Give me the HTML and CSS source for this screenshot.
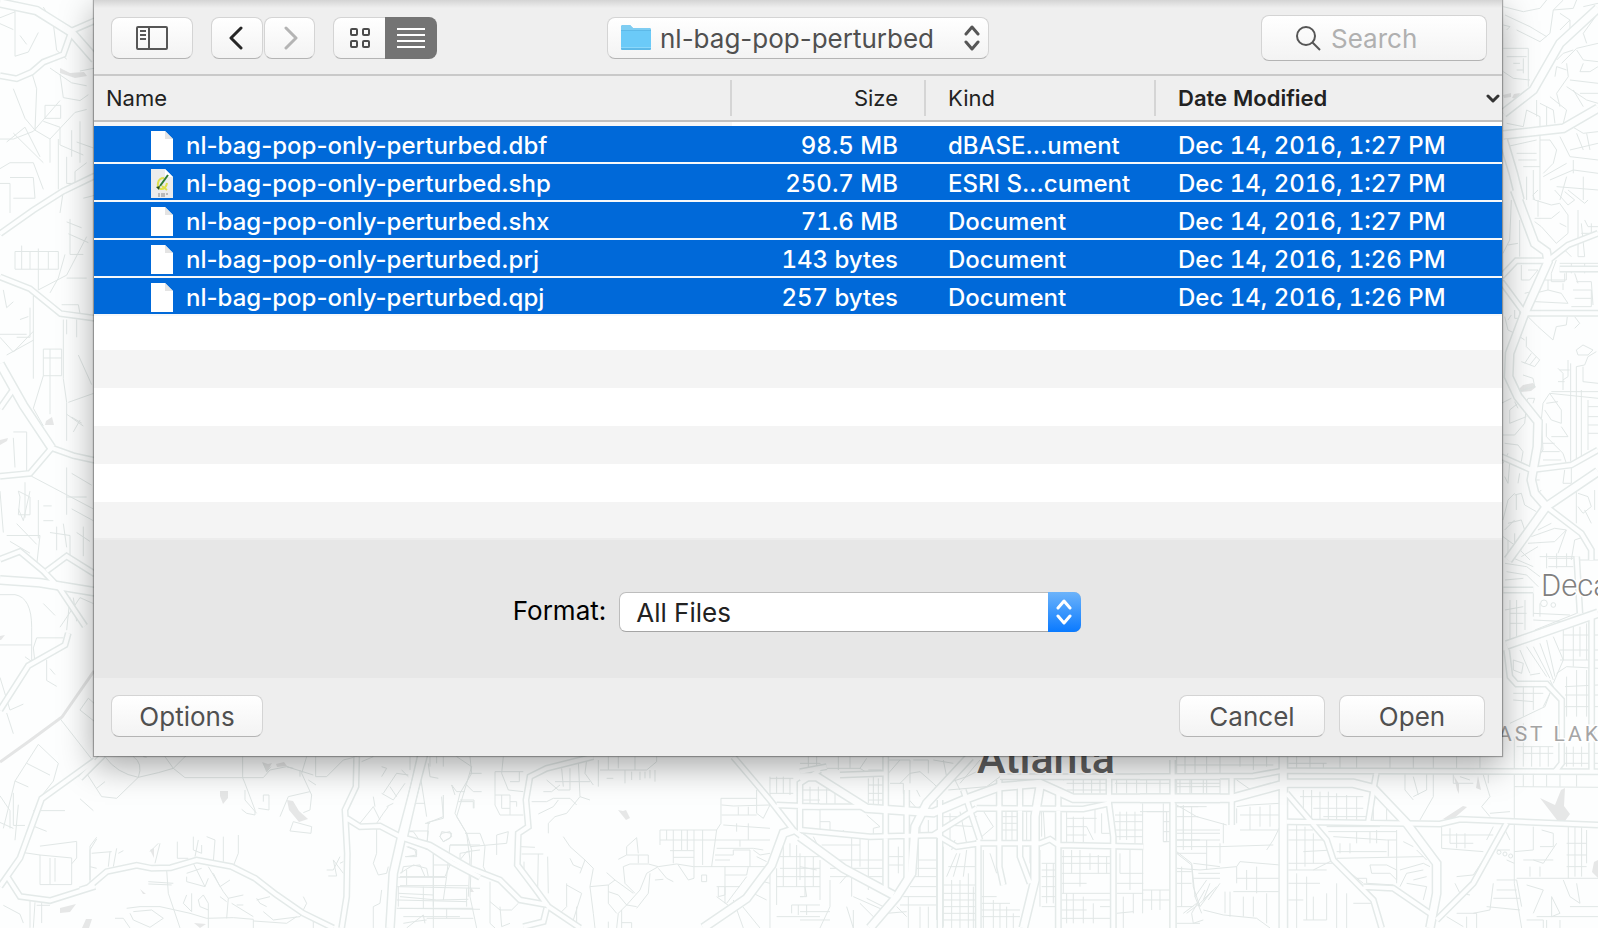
FILE: index.html
```html
<!DOCTYPE html>
<html lang="en">
<head>
<meta charset="utf-8">
<meta name="viewport" content="width=device-width, initial-scale=1">
<title>Open</title>
<link rel="stylesheet" href="styles.css">
</head>
<body>
<div class="stage">
  <svg class="map" viewBox="0 0 1598 928" preserveAspectRatio="xMinYMin slice" aria-hidden="true">
    <defs>
      <g id="avenues">
        <g transform="scale(.3333 .5917)">
          <path d="M0 468 90 488 182 530 285 538M0 395 100 355 190 323 285 297M0 128 50 133 95 122 130 105 190 92 215 52M215 52 285 35M0 805 90 800 155 757 220 770 285 778M0 945 60 932 130 965 180 995 255 1058M140 965 200 940 285 970M0 1200 85 1125 195 1090 205 1070M0 1498 60 1450 125 1350 285 1285M20 1480 60 1515 150 1522 285 1498M0 690 40 658"/>
        </g>
        <g transform="translate(80 640) scale(.3333)">
          <path d="M0 750 25 742 80 695 170 676 215 685 272 683 350 660 455 680 525 715 590 765 670 820 760 864M830 350 828 440 795 510 802 640 800 770 785 864M800 535 840 560 900 558 965 592 1045 620 1120 670 1200 712M0 415 70 345"/>
        </g>
        <g transform="translate(400 740) scale(.3333)">
          <path d="M580 50 440 85 390 110 378 180 385 260 355 280 352 375 405 445 445 500 540 564M0 290 90 315 210 385 300 420 360 480 445 495M1000 50 1110 180 1180 270 1260 330M1200 275 1200 130 1260 90M1130 195 1260 200M440 505 430 545 370 560"/>
        </g>
        <g transform="translate(800 740) scale(.3333)">
          <path d="M257 50V450M320 150V420M420 180V564M535 300V564M598 120V380L610 435M660 130V350L690 430M775 150V564M927 110V190L940 290V564M1118 60V564M0 200H200M0 270 210 290 410 285 470 320 540 310H720L750 298 775 315 1030 320M120 105 260 100M600 110H1260M530 205 850 207 930 190M490 150 540 300M400 285 530 205M0 95 80 80"/>
        </g>
        <g transform="translate(1140 550) scale(.3333)">
          <path d="M0 680 340 678 430 662 1374 665M100 760V1134M275 680V825M440 815 900 822 960 808 1374 825M440 730 560 870 580 930 700 1050 725 1134M1100 820 1000 1000 890 1110M710 665 700 720 685 815M1355 200V665M1090 120 1180 120M1100 300 1110 380 1130 402 1220 402 1265 450V640L1245 665M1310 20 1320 190M670 1010 760 1015 870 1090"/>
        </g>
        <g transform="translate(1488 190) scale(.3333)">
          <path d="M40 260 85 212 180 212 240 165 330 130M40 275 110 370M110 370H330M40 800 130 840 250 825 330 780M175 950 280 1030 310 1080V1110M215 237H330"/>
        </g>
      </g>
      <g id="highways">
        <g transform="scale(.3333 .5917)"><path d="M0 5 110 18 215 55 285 100M0 615 70 685 155 757M0 980 120 985 285 1000"/></g>
        <g transform="translate(80 640) scale(.3333)"><path d="M1030 345 965 590 940 700 930 864"/></g>
        <g transform="translate(400 740) scale(.3333)"><path d="M65 50 10 290M1180 270 1150 280 1115 375 1040 475 910 564"/></g>
        <g transform="translate(800 740) scale(.3333)"><path d="M0 110 50 110 200 205 400 218 490 180 600 140 720 130 820 175 1260 175M0 290 130 385 280 465M510 50 380 190 345 260 335 400 290 470 210 564M720 140 705 230 705 420 670 564"/></g>
        <g transform="translate(1140 550) scale(.3333)"><path d="M0 745 275 745 440 700 640 700 700 715 800 820 890 940 890 1030 870 1134M1100 285 1374 190M430 620V1134"/></g>
        <g transform="translate(1140 0) scale(.3333)"><path d="M1374 25 1260 130 1180 270 1090 340M1090 405 1270 385 1374 325M1090 420 1120 520 1140 600"/></g>
        <g transform="translate(1488 190) scale(.3333)"><path d="M80 0 140 160 175 185 180 215 110 370 65 490 62 560 90 620 150 695 148 770 130 870 140 910 175 950M330 845 175 950 60 1110"/></g>
      </g>
    </defs>

    <g class="land">
      <path d="M60 68l10 5 14-1 3 4-12 2-15-5zM0 440l8-2-1 3-7 4zM0 636l5-1-4 5H0zM60 908l16-4-6 8-10 1zM46 421l6-4 2 8h-9z"/>
      <path d="M220 791h8v7l-5 6-3-8zM262 762l6 2 4-1-5 9zM276 764l8-2 3 4-10 1zM287 800l6 1 6 10 9 8-9 3-10-12zM150 850l4-2v10zM82 928l4-9h6l-3 9zM140 889l6 5-3 0zM194 923l12 1-6 4z"/>
      <path d="M618 810l5 1 3-1 4 8-4 2zM470 886l4 6-4 0z"/>
      <path d="M1540 798l15 7 6-15 4-2-1 18 6 8-5 7-8-1zM1443 819l20-13 4 1-15 13zM1454 776l5 8v10l-2-4zM1478 776l3 14-5-2zM1594 862l4-2v18l-6-6z"/>
      <path d="M1518 390l5-5 10-2 3 4-5 4-10 1zM1503 95l8-2v4l-7 1zM1514 94l6-1-3 6-5-1z"/>
    </g>
    <path class="rail" d="M0 762 28 742 62 717 94 671"/>

    <g class="streets">
      <g transform="scale(.3333 .5917)">
        <path d="M45 18V95M45 95 85 88 115 55M130 12 160 40 170 85 200 100M0 40 40 50M95 122 110 150 105 220 75 200 40 150M0 235H40L100 222 180 170M40 225 130 275M20 240 75 215 120 265M105 220 150 235 225 190 260 185M135 178H182V200H135ZM150 115 215 140 260 145M180 125 190 165 240 170 265 160M130 205 180 215V245L250 262M150 235V275M175 235V320M215 220V265M240 205V275M200 265V310H225V290L260 275M0 285 30 275H100L130 320M30 300H100L105 335H40M0 310H30V360M190 323 180 360M45 425H175V455H45V425ZM65 415V455M90 425V455M115 420V490M145 425V455M200 375 245 385M205 395 265 410M210 370V430H250M195 430 175 470 150 495M260 400 200 465 115 490M200 470H260M10 490 20 520 40 510M50 570H90V520M60 540 85 535M0 565H80M185 515H235L240 530M200 540V565M230 540V570M100 500V640M130 590H185V635H130ZM130 605H185M150 590V700M190 540V640L200 680V745M130 635 100 690 130 720M20 600 100 575M0 570 40 595 100 560M205 680 280 665M200 700 250 720M215 705 245 715M220 730 240 710M40 730H80V800M40 740 45 790M55 830 90 840V870H55L60 840ZM75 815V875M95 805 280 860M90 830 70 880 55 860M115 845V910M130 880H160M130 855H155M0 830 10 900M200 790V870M215 800 275 820M200 840H260M215 860 280 880M20 905H120M30 915 90 935M50 885 110 920M120 905 110 955M150 900 210 905V940M170 890V930M190 885 200 925M230 900 270 915M250 890V940M0 1005H45Q95 1010 95 1060V1118M0 1090H95M95 1118 75 1110M100 1095 110 1078 190 1078M100 1095 105 1120M130 1020 165 1040M140 1115V1150L170 1160M150 1130 165 1140M210 1010 200 1065M180 1060 240 1010 280 1020M220 1010 230 1050M0 1145 30 1200 70 1190M20 1205 40 1240M240 1200 265 1180 285 1190M240 1200 285 1220M178 1213 285 1290M45 1320 115 1258 175 1290 160 1320 125 1345M80 1290 150 1310M10 1400 45 1320 85 1330M40 1340V1395H75M55 1360 45 1420M0 1390 40 1400M100 1370H195M95 1395 140 1405M60 1440 120 1445V1495H215V1450L120 1445M150 1450V1495M165 1450V1490M120 1430 230 1422V1450L215 1460M290 1415 270 1430V1495M90 1520V1568M105 1525 100 1568M110 1530H150M125 1525V1560M10 1530 60 1545 70 1560M240 1350 280 1370M0 1345 30 1370V1400M230 240 280 250M0 30 45 20M60 60 80 75M240 120 285 115M250 335 285 330M235 600 275 650"/>
      </g>
      <g transform="translate(80 640) scale(.3333)">
        <path d="M20 400 65 470 110 475 175 412 235 398 280 385 320 345M50 445 75 425M75 350Q110 400 175 412 190 370 160 350M190 350 200 352M255 350 280 385 315 413 550 413 570 390 620 380 700 405M488 350V413L495 430 525 510V525L500 520 485 508M495 450V480L530 520M550 370 560 395 573 380M550 485V465H567V510L535 505M640 385 620 380M680 350 665 400 695 465 690 510 670 518M707 350V410L740 410 790 360 830 350M660 390V410M685 420 708 435M600 530 625 470 690 455M640 545 695 560 693 580 630 573 640 545M30 720V630L50 597M35 640 95 635M30 680 50 685M110 625 100 680M115 640 130 632M90 635 85 680M240 610 225 670M292 605V655L325 655M340 590V630L365 640V615M355 600 345 650M380 590 405 600 400 665M430 590V665M475 585V640L460 678M210 635 235 610M260 690 265 760 300 864M340 670 375 740M385 680 430 755 445 775 440 835M320 700 365 685M320 710V725L375 740 385 715M205 725 280 730M205 732 275 735M400 700 420 740 450 720M420 770 440 785M445 775 490 765M455 790 520 830M470 795H490M140 805 180 800H240L330 820 380 835 460 833 520 838V864M150 820 160 840 210 862 250 835 215 810 160 815M105 835H130L150 864M320 765 310 790 335 815V760M385 864V790L370 765 355 780 360 800 385 810M530 780 570 770M530 775 540 790 560 800M550 815 580 840 660 830 680 790 670 770M520 843 620 850 650 830M700 835V864M740 690H760L780 650M745 708H770L760 660 790 700M780 670 790 665M905 750 900 790 880 800V864M840 550 880 500 900 540M880 470 885 500M890 550 910 520 925 500M890 560V640L880 670 895 705 920 700 925 680M845 365 880 350M905 380 920 385 905 410M910 460 950 400 985 405M905 460 940 480 975 430M920 500 940 490M930 440 950 470M965 390 985 410M1005 490H1035M1050 550H1035M980 573H1045L1040 620M1020 400 1040 530M1045 370 1050 410 1075 415M1050 380V350M1070 370V350M1090 350V380M1130 350 1175 380 1160 430 1130 530 1160 580 1170 660 1165 770M1115 435 1130 455H1155M1085 470 1090 530 1045 548M1135 485H1180V505M1060 640V800M1110 615 1100 710 1090 780M980 650 1010 645V630L985 620M1085 580 1110 575 1115 590 1090 605 1080 590ZM1110 615H1200M1140 660 1160 635 1200 630M1060 675H1130M955 712H1100M950 740 1200 745M955 760 1060 765M950 780 1160 785M950 805 1200 808M980 690V735M960 700 1000 675 1040 685 1045 710M970 830H1140M980 864 1030 825 1035 850M955 740V800M1160 745V800"/>
      </g>
      <g transform="translate(400 740) scale(.3333)">
        <path d="M30 50V90M210 50 215 100 180 160 165 220 200 280 215 330 210 470 230 564M210 100H245M155 135 165 165M180 180H222V205M200 135 220 155H245M130 165V235L80 248M310 50 305 100 325 150 370 155M285 95H370M285 95V195L300 225H370M285 165H330V225M305 165V205H330M330 185H350V200M358 95V125H330M440 120 475 150 510 150M485 85 490 140M430 155H455L480 135M465 125H570M510 85V150M535 60 540 170 570 180M560 60 555 100 580 135M595 60V140M625 50V90H740L770 65V50M600 90H625M620 115H640M655 50V85M675 90V130M705 50V90M695 95V120M720 95V120M735 95V115M750 90V115M765 90V125M395 185H440L460 175H510L530 195M475 180 460 200 415 222M540 170 500 220 465 230 445 250V280M490 290 510 320 555 360 580 385 570 440 580 520 585 564M555 360 540 400M510 355 520 375 545 385M570 440 625 435 645 420 620 398M645 420 700 460M625 435V490L650 520M625 455 655 465 680 495 710 500M680 495 720 450 740 400 775 380M750 400 745 460 710 505M655 520 680 495M655 520 650 564M625 564V545M665 510V564M665 548H695V564M670 380 675 430 705 460M670 380 690 372H745L775 380M655 358 680 345H745V370M680 345V320L710 293 715 340M715 345V370M775 380 830 372 880 380H1110M775 385 800 415 820 425M765 420 790 418M780 270H950M780 300H1110M780 270V315M800 270V300M820 270V370M845 270V330M862 270V330M882 270V415L865 420 835 375M908 270V375M810 332H882M820 352H882M905 405H920V425H905ZM950 270 935 380M950 270 963 250V175H1070M965 195 1000 198 1110 195M1015 200V225M1045 200V225M965 225H1070M1070 150V220L1090 235 1110 195M970 255 1110 265M1010 250V275M1045 250V300M1020 300V320M950 325H1060L1090 330M945 345 1000 345V330H1050V380M945 360H990M1060 330 1080 345 1110 340M1070 350 1100 365M975 380V490M950 440H975V465L955 470V440M975 405H1040L1045 380M975 440H1020M980 490 1040 410M950 470 990 500M1000 480 1030 564M1020 490 1080 564M1050 455 1100 480M1070 420 1110 430M1110 370V564M1130 385V495M1150 310V440M1170 310V350M1190 315V440M1215 350V440M1240 350V440M1130 350H1260M1140 385H1260M1130 410H1260M1130 440H1260M1110 110V190M1130 110V160M1150 110V160M1170 115V165M1110 115H1180M1110 160H1180M1210 470H1200M1215 440V470M1175 495H1260M1175 495V520M1195 495V525M1220 495V525M1130 530H1260M85 250 80 330 40 275 15 275M125 275 155 280 150 295 130 305 120 290ZM150 315H210M210 320 320 310 325 275 290 285V345M240 280 255 320 250 380 260 400M195 280H240M180 365V340L210 335M20 320 45 330 50 350H15M5 400 10 380 60 375 75 410M0 410H135L150 375M100 340V564M0 437H205M0 470 110 480 205 478M0 505H220M70 440V505M140 505V535M80 535H220M10 550 40 545 80 540M360 320 405 322M365 342H430M372 365V400M415 342 413 450M443 350 445 460M270 425V550L285 564M300 510H335L355 490M270 485 300 510M300 500 305 560 330 550M500 430V500L480 520M500 435 545 460 520 540M530 500V564"/>
      </g>
      <g transform="translate(800 740) scale(.3333)">
        <path d="M0 70H60L75 85H180L200 55M25 50V100M50 50V90M115 50V90M150 50V85M180 85 220 110V200M205 90H245M0 150H90M5 125V200M30 140V200M55 140V200M80 145V200M105 145V200M205 115V190M0 180H60M205 135H250M205 160H250M205 180H250M235 115V215M265 100 300 60M265 60H330V130M270 130H310V160L350 205 380 190M300 130 330 100 360 95 400 130 420 150M340 60H385V100M360 170 350 150M200 225 240 260 220 265V290M60 205V270M60 245H90V270M130 270V290M155 290V470M180 295V380M205 290V450M40 290 60 330M65 315H180M90 360H250M90 385H250M90 410H250M0 410H60M60 360V480M15 440 20 470H0M90 420V500L60 564M120 430 150 395M160 470 250 510M160 510V564M180 490 230 540M200 475 250 500M140 500 160 564M0 515H90M0 540H90M0 380 50 390M265 320V450M295 320V400M265 350H310M265 375H310M360 240V285M385 240V290M355 290V410M410 290V540M355 360H410M350 385H410M340 410H410M330 440H410M310 470H410M300 495H410M260 520 320 515M325 470V564M290 500 320 530M360 500V564M385 500V564M430 320V560M430 435H530M430 460H530M430 480H530M430 500H530M430 520H530M430 540H530M455 330 465 300M440 410 470 340M480 340 460 410M500 330 490 410M445 380H530M455 420V564M480 420V564M505 400V564M520 440V564M550 330V564M570 340 590 400M545 470H590M545 490H630M545 510H660M545 530H660M580 480V564M600 490V564M620 500V564M640 520V564M600 215V300M618 210V300M636 210V300M655 210V300M600 230H660M600 250H660M600 270H660M545 205 580 260 545 290M680 210V320M690 320V370M730 210 735 300M725 210 725 290M720 330V500M740 370V490M760 370V490M725 370H775M725 390H775M725 410H775M725 440H775M725 470H775M725 500H775M800 215V310M820 230V310M850 230V310M885 210V280M800 235H890M800 260H860M800 285H860M860 260 880 300M905 220V280H930M790 330V460M815 330V400M840 330V440M870 340V390M895 345V400M920 350V400M785 350H930M785 370H930M785 400H930M785 430H860M785 460H930M785 480H930M785 510H860M800 460V550M820 460V550M850 470V550M880 490V550M900 500H930M785 535H930M960 340V400M990 320V450M960 400H1030M950 430H1030M950 460H1030M970 470V564M1000 460V520M1028 190V520M1028 450H1110M1028 480H1110M950 520 1000 515M1055 450V510M1080 450V510M1090 190V305H1110M1090 215H1110M1090 245H1110M1090 275H1110M1040 215H1090M960 215V300M980 215V300M1005 215V310M945 225H1028M945 245H1028M945 270H1028M945 290H1028M790 120 810 110M800 130H920M800 150H920M820 110V160M850 110V160M875 110V160M900 110V160M950 110V160M980 110V160M1010 110V160M1040 110V160M1080 110V160M945 130H1110M1140 110V160M1175 110V160M1210 110V160M1130 130H1260M1130 200H1195M1130 230H1195M1130 270H1260M1130 300H1260M1150 200V330M1175 200V330M1130 340 1175 375 1180 440 1200 500 1230 460M1160 520 1200 490M1130 395H1175M1130 430H1175M1145 380V500M1130 500H1180M1180 370 1260 380M1195 400H1260M1215 450 1175 520 1180 550 1210 540M1230 430 1210 480 1240 450M1130 550H1200M430 230H530M430 255 530 260M450 220V320M480 215 500 310M430 60 440 110 520 60M440 130 500 110 600 60M445 150 560 140 600 110M460 110 480 150M400 60 460 70M500 60 470 110M540 60 480 130M0 340V420"/>
      </g>
      <g transform="translate(1140 550) scale(.3333)">
        <path d="M110 620V670M135 620V670M165 620V670M200 620V670M240 620V670M300 620V650M340 620V660M380 620V650M110 645H400M110 690V730M150 690V730M200 685V730M110 710H240M240 690V735M290 690 340 725M0 785H80V875H70M110 770H180L200 770M110 765 170 800 260 825M130 765V850M110 850H240M290 770 330 765 420 760M290 775V820M300 795H420M330 770V840M360 770V830M390 765V830M300 840H420M420 830 400 870 380 900M110 890H240L400 885M110 910H200M200 870V960M240 880V940M250 820V880M110 870H180M110 905 155 940 165 1040 185 1090M110 955 180 960 290 950 300 935 420 945M160 985H240M165 1040 200 990M180 1060 230 1010M205 1050 240 1000M130 1090 170 1060M290 950V1000M320 960V1020M350 950V1030M290 985H420M280 1025H420M255 1025V1090M270 1025V1100M310 1040V1100M340 1040V1100M380 1030V1120M190 1080 250 1095 350 1105 390 1134M445 640H560M470 620V655M510 620V655M550 640V655M600 620V655M650 620V655M750 620V655M820 620V655M880 620V655M950 620V655M1020 620V655M445 840H520M445 870H550M470 820V960M495 830V950M520 850V940M490 905 580 900M520 960 580 930M445 940H580M445 960H560M470 970V1134M500 980V1110M445 1000H540M445 1050H490M490 1110H560V1030M520 1040V1110M590 1000V1134M620 1030V1134M640 1060H700M490 720V800M515 720V810M540 725V810M565 725V810M590 730V810M620 735V810M650 740V810M480 740H670M520 775H670M550 800H680M700 740V810M740 760V810M560 830H720M565 845H770M580 860 740 870H770M600 880V910M630 880V910M590 905H740M590 925 850 920M650 845V880M690 845V880M710 840V880M745 870V920M770 840V1000M790 875 820 890M800 840 830 880M690 945H740L770 960V990L750 970H695ZM650 985H680V1000L760 1005M620 960 670 1000M780 1010 800 970 850 960M780 960 850 940 870 950M800 1000 860 1010 850 1050M820 990 860 980M830 900 860 930M795 670V720L820 750M820 680 835 735M880 670V740L840 810M860 670V720L820 740M940 670V700H1000M960 680 990 690M1030 675 1050 740 1025 770 1050 800M1045 700V670M1050 790 1110 785M1123 560V1000L1145 1134M1123 710 1374 712M1150 670V710M1180 670V710M1220 670V710M1260 670V710M1310 670V710M905 830V895L1030 905M905 855H1060M930 835V880H1000M950 850V895M975 850V895M1060 830 1040 870M1095 840 1110 870M950 980 1000 975 1030 930M945 1000 960 1030 990 1035M1070 900H1110M1100 930 1123 940M1070 990H1130L1145 1070M1060 1000 1050 1080 1000 1090M1070 1020H1130M1060 1045H1140M1040 1070 1140 1080M950 1090H1010V1134M980 1100V1134M920 1100 970 1130M1180 830V900L1123 905M1205 840 1240 850V890H1200M1180 930 1210 940 1250 880M1150 930H1240M1170 950V980M1200 950V980M1130 985H1374M1285 830V985M1305 830V980M1325 830V980M1280 880H1340M1280 915H1340M1280 950H1340M1340 840V940M1160 1005 1210 1020 1180 1090M1235 1040 1260 1090 1235 1100ZM1270 990 1290 1040 1320 1060M1310 1000 1320 1060M1190 1100H1374M1220 1110V1134M1260 1110V1134M1290 1070H1374M1160 1110H1210V1134M1095 40 1160 50 1200 80M1110 20 1180 50M1140 0 1170 30M1100 65 1160 75 1195 110M1095 90 1150 85M1220 10V55M1250 10V55M1225 25H1300M1225 50H1300M1280 10V50M1320 30H1374M1110 150V270M1130 150V260M1155 150V240M1180 130V200M1110 190H1160M1110 220H1150M1180 190 1290 195M1180 210 1280 215M1200 160V200M1185 240 1310 190M1095 180 1150 170M1320 230V320M1300 230V350M1340 220V330M1270 230V330M1270 255H1374M1260 300H1374M1260 330H1374M1140 300 1170 370M1160 290 1220 380M1180 290 1230 385M1200 280 1240 390M1220 270 1245 380M1240 260 1270 330 1240 400M1120 330 1150 340 1145 370 1120 360ZM1170 375 1200 370M1250 370 1280 350 1374 355M1230 390 1240 410 1210 470M1120 430H1210M1120 450 1180 455M1110 520 1215 470 1230 430M1150 410V500M1180 410V480M1275 410 1374 405M1280 380V500M1310 360V500M1340 360V500M1275 435H1374M1275 470H1374M1150 520V650M1175 590V650M1200 590V650M1225 590V650M1150 610H1240M1130 590H1240M1280 590V650M1300 590V650M1325 590V650M1275 610H1374M1275 640H1374"/>
        <circle cx="1077" cy="907" r="6"/><circle cx="1095" cy="912" r="6"/><circle cx="1112" cy="918" r="6"/><circle cx="1212" cy="160" r="10"/><circle cx="1240" cy="165" r="7"/>
      </g>
      <g transform="translate(1140 0) scale(.3333)">
        <path d="M1090 20 1150 35 1200 25 1220 0M1095 45 1170 80 1220 110M1090 75 1110 80 1100 90M1130 90 1200 125 1230 100 1240 30 1270 0M1090 145H1165V260M1100 170H1160M1150 175V220M1120 190H1140M1130 210H1150M1090 215 1120 235 1170 240M1240 30 1300 25 1310 0M1260 40 1290 60 1260 90M1290 60V100M1330 20 1374 10M1370 45 1330 100 1340 130M1265 190 1310 145 1374 130M1250 180 1270 160 1300 150M1280 190 1285 230 1250 280 1260 320M1310 150 1330 180 1374 185M1330 190 1320 215H1350L1374 200M1245 230 1250 200 1280 210M1290 240 1374 250M1280 260 1340 300 1374 310M1300 270 1330 320M1320 280 1374 280M1230 290 1280 330 1270 370M1200 310 1240 330 1245 370M1160 330 1200 350V380M1190 300V350M1220 320V380M1100 370 1150 380 1160 330M1280 370 1330 400 1374 395M1200 400V600M1200 420H1230L1250 450 1240 490 1210 520M1260 410 1290 470 1374 480M1290 450 1374 430M1310 400 1330 450M1340 400 1350 450M1100 440 1190 420M1130 460H1190M1135 480H1190M1150 500H1200M1160 530V600M1180 510V600M1210 530 1280 490M1230 540 1300 510 1374 520M1300 480V520M1250 560 1374 570M1280 530 1260 600M1330 530V600"/>
      </g>
      <g transform="translate(1488 190) scale(.3333)">
        <path d="M135 15 150 0M135 15 140 30 190 45 215 40 240 75V130L205 160 160 110 140 95M140 85H190L215 65M150 30V80M200 0 240 45 260 30 230 5M240 0 290 40 300 30M270 60V200H290L280 100M290 90 300 110 330 110M280 130H310V100M215 100 235 110M70 30 65 150 45 190M95 90V200M60 165 90 160M100 225V270H125L150 240M120 240H150M190 250V275H230V250M170 270H235V245M260 250 270 280M110 310 130 305V340M140 330V310L180 300 220 310 240 340M140 335 240 340M180 270V300M225 280V300M255 300H310V350H250M260 325H310M265 275H310L315 345M120 380 150 410 195 450 205 410 235 405 238 380M260 380 275 400 260 415M50 380 60 420 80 430 75 450M80 360V385H95V360M60 390 70 375M115 440V470L155 510 140 530 100 515M110 520 130 490M125 525 145 500M80 430 110 450M265 480 285 465 315 480 300 495H270ZM300 500 325 485M210 535 225 550V600M240 510V560L225 570M248 520V815M265 530V815M265 530 290 525 300 500M285 530V575L330 580M210 575H230M245 540H215M105 555 135 565 140 590 90 605M120 590 110 600M40 640 70 625M80 635 90 655M110 645 120 625 140 625 135 640M115 680 65 700V660L90 640M115 650 110 700 80 735H45M50 760 90 765 105 785 100 815M45 820 60 790M65 820 60 880 50 860M160 690 165 640 185 610 220 660V700L190 690 170 660M175 640 210 635M185 610 330 625M190 605H330M160 690 165 780 150 800M175 700V740L225 790 235 820M190 740H240M220 710 240 740M160 760H200M160 785H215M165 810H220M300 630V780M300 650H330M300 680H330M300 705H330M280 600V815M300 730H330M90 880 95 850M130 870H155M150 910 160 900M80 915 100 910 110 945 145 965M85 915V960M45 990 60 930 80 910M60 1000 100 990 110 1020 95 1060M50 1020 80 990M45 1040 100 1080M60 1050V1110M80 1030V1080M230 840 225 880H250V830M265 900V1000M270 910 300 920 310 950 285 970 270 950M290 960 310 1000M130 1040 200 1015 235 1020 200 1055 120 1060M150 1020 190 1000M155 1100H260M235 1020 210 1090M250 1110 260 1050 290 1040M100 1100 150 1070M320 900V960M230 180 250 200M205 210 190 250M215 220H330M215 245H330M250 220V250M290 220V250"/>
      </g>
    </g>
    <use href="#avenues" class="avenue-casing"/>
    <use href="#highways" class="highway-casing"/>
    <use href="#avenues" class="avenue-fill"/>
    <use href="#highways" class="highway-fill"/>
    <text class="place place-city" x="977" y="773">Atlanta</text>
    <text class="place place-town" x="1541" y="596">Decatur</text>
    <text class="place place-area" x="1483" y="741">EAST LAKE</text>
  </svg>

  <main class="dialog" role="dialog" aria-label="Open file">
    <header class="toolbar">
      <div class="tools">
        <button class="btn tool tool-sidebar" type="button" aria-label="Toggle sidebar">
          <svg width="32" height="24" viewBox="0 0 32 24" fill="none" stroke="#565656" stroke-width="2"><rect x="1" y="1" width="30" height="22" rx="1"/><path d="M13 1v22M4 5h6M4 9h6M4 13h6"/></svg>
        </button>
        <div class="pair">
          <button class="btn tool" type="button" aria-label="Back">
            <svg width="16" height="24" viewBox="0 0 16 24" fill="none" stroke="#262626" stroke-width="3" stroke-linecap="round" stroke-linejoin="round"><path d="M12 2 2 12l10 10"/></svg>
          </button>
          <button class="btn tool tool-forward" type="button" aria-label="Forward" disabled>
            <svg width="16" height="24" viewBox="0 0 16 24" fill="none" stroke="#b4b4b4" stroke-width="3" stroke-linecap="round" stroke-linejoin="round"><path d="m4 2 10 10L4 22"/></svg>
          </button>
        </div>
        <div class="segments">
          <button class="btn tool segment" type="button" aria-label="Icon view">
            <svg width="20" height="20" viewBox="0 0 20 20" fill="none" stroke="#4c4c4c" stroke-width="2"><rect x="1" y="1" width="6" height="6" rx="1"/><rect x="13" y="1" width="6" height="6" rx="1"/><rect x="1" y="13" width="6" height="6" rx="1"/><rect x="13" y="13" width="6" height="6" rx="1"/></svg>
          </button>
          <button class="btn tool segment segment-on" type="button" aria-label="List view" aria-pressed="true">
            <svg width="28" height="20" viewBox="0 0 28 20" stroke="#fff" stroke-width="2"><path d="M0 1h28M0 7h28M0 13h28M0 19h28"/></svg>
          </button>
        </div>
      </div>
      <div class="location">
        <svg class="folder" width="30" height="26" viewBox="0 0 30 26" aria-hidden="true"><path d="M0 24V2q0-2 2-2h7l3 3h16q2 0 2 2v19q0 1-1 1H1q-1 0-1-1z" fill="#5db9e8"/><path d="M0 5V2q0-2 2-2h7l3 3h16q2 0 2 2z" fill="#7fcdf2"/><path d="M0 6h30v16H0z" fill="#6bcaf8"/><path d="M0 22h30v1H0z" fill="#8ad7fa"/></svg>
        <select class="btn location-select" aria-label="Folder"><option>nl-bag-pop-perturbed</option></select>
        <svg class="location-arrows" width="16" height="26" viewBox="0 0 16 26" fill="none" stroke="#565656" stroke-width="3" stroke-linecap="round" stroke-linejoin="round" aria-hidden="true"><path d="m2 9 6-7 6 7M2 17l6 7 6-7"/></svg>
      </div>
      <label class="btn search">
        <svg width="26" height="26" viewBox="0 0 26 26" fill="none" stroke="#565656" stroke-width="2" aria-hidden="true"><circle cx="11" cy="11" r="9"/><path d="m17 17 8 8"/></svg>
        <input class="search-input" type="text" placeholder="Search" aria-label="Search">
      </label>
    </header>

    <table class="files">
      <colgroup><col><col class="col-size"><col class="col-kind"><col class="col-date"></colgroup>
      <thead>
        <tr>
          <th scope="col"><span class="head">Name</span></th>
          <th scope="col" class="size"><span class="head">Size</span></th>
          <th scope="col"><span class="head">Kind</span></th>
          <th scope="col" class="sorted" aria-sort="descending"><span class="head">Date Modified
            <svg width="14" height="10" viewBox="0 0 14 10" fill="none" stroke="#333" stroke-width="3" stroke-linecap="round" stroke-linejoin="round" aria-hidden="true"><path d="m2 3 5 5 5-5"/></svg></span></th>
        </tr>
      </thead>
      <tbody>
        <tr><td class="name"><span class="file"><svg class="doc" viewBox="0 0 22 30" aria-hidden="true"><path d="M0 0h14l8 8v21H0z" fill="#fff"/><path d="M14 0v8h8z" fill="#e4e4e4"/></svg>nl-bag-pop-only-perturbed.dbf</span></td><td class="size">98.5 MB</td><td>dBASE…ument</td><td>Dec 14, 2016, 1:27 PM</td></tr>
        <tr><td class="name"><span class="file"><svg class="doc" viewBox="0 0 22 30" aria-hidden="true"><path d="M0 0h14l8 8v21H0z" fill="#ececec"/><path d="M14 0v8h8z" fill="#fff"/><path d="M13 9q-5 0-6 5-1 5 3 6 5 0 6-6M11 17l5 4" fill="none" stroke="#dfe04a" stroke-width="2"/><path d="M17 6 9 17" stroke="#2f7d32" stroke-width="2"/><path d="m5 18 4-1-1 4z" fill="#24501f"/><path d="M7 25h2M7 27h2M11 24v4M13 24v4M15 25h2" stroke="#888"/></svg>nl-bag-pop-only-perturbed.shp</span></td><td class="size">250.7 MB</td><td>ESRI S…cument</td><td>Dec 14, 2016, 1:27 PM</td></tr>
        <tr><td class="name"><span class="file"><svg class="doc" viewBox="0 0 22 30" aria-hidden="true"><path d="M0 0h14l8 8v21H0z" fill="#fff"/><path d="M14 0v8h8z" fill="#e4e4e4"/></svg>nl-bag-pop-only-perturbed.shx</span></td><td class="size">71.6 MB</td><td>Document</td><td>Dec 14, 2016, 1:27 PM</td></tr>
        <tr><td class="name"><span class="file"><svg class="doc" viewBox="0 0 22 30" aria-hidden="true"><path d="M0 0h14l8 8v21H0z" fill="#fff"/><path d="M14 0v8h8z" fill="#e4e4e4"/></svg>nl-bag-pop-only-perturbed.prj</span></td><td class="size">143 bytes</td><td>Document</td><td>Dec 14, 2016, 1:26 PM</td></tr>
        <tr><td class="name"><span class="file"><svg class="doc" viewBox="0 0 22 30" aria-hidden="true"><path d="M0 0h14l8 8v21H0z" fill="#fff"/><path d="M14 0v8h8z" fill="#e4e4e4"/></svg>nl-bag-pop-only-perturbed.qpj</span></td><td class="size">257 bytes</td><td>Document</td><td>Dec 14, 2016, 1:26 PM</td></tr>
      </tbody>
    </table>
    <div class="empty-rows"></div>

    <section class="format">
      <label for="format">Format:</label>
      <div class="format-field">
        <select id="format" class="format-select"><option>All Files</option></select>
        <span class="stepper" aria-hidden="true"><svg width="17" height="26" viewBox="0 0 17 26" fill="none" stroke="#fff" stroke-width="3" stroke-linecap="round" stroke-linejoin="round"><path d="m2 9 6-7 6 7M2 17l6 7 6-7"/></svg></span>
      </div>
    </section>

    <footer class="actions">
      <button class="btn action action-options" type="button">Options</button>
      <button class="btn action" type="button">Cancel</button>
      <button class="btn action" type="button">Open</button>
    </footer>
  </main>
</div>
</body>
</html>
```

FILE: styles.css
```css
* { box-sizing: border-box; }

body {
  margin: 0;
  background: #fdfefe;
  font-family: Inter, Roboto, "Liberation Sans", sans-serif;
  color: #222;
}

.stage {
  display: grid;
  min-height: 100vh;
  overflow: hidden;
}

.map,
.dialog { grid-area: 1 / 1; }

/* Street map backdrop */
.map {
  width: 100%;
  height: 100vh;
  fill: none;
}
.map path,
.map circle { vector-effect: non-scaling-stroke; }
.land { fill: #e6e7e7; }
.rail { stroke: #e4e5e5; stroke-width: 3px; }
.streets { stroke: #e1e7e6; stroke-width: 1px; }
.avenue-casing { stroke: #e4eae9; stroke-width: 7px; }
.avenue-fill { stroke: #fdfefe; stroke-width: 4px; }
.highway-casing { stroke: #e4eae9; stroke-width: 10px; }
.highway-fill { stroke: #fdfefe; stroke-width: 7px; }
.place {
  font-family: Roboto, sans-serif;
  stroke: #fff;
  stroke-width: 3px;
  paint-order: stroke;
}
.place-city { font-size: 43px; font-weight: 500; fill: #606060; }
.place-town { font-size: 31px; font-weight: 300; fill: #808080; }
.place-area { font-size: 21px; fill: #a5a5a5; letter-spacing: 3px; }

/* Sheet */
.dialog {
  align-self: start;
  margin: 0 96px 0 94px;
  background: #eee;
  box-shadow: 0 0 1px 1px rgba(0, 0, 0, .3), 0 10px 32px rgba(0, 0, 0, .35);
}

.btn {
  height: 42px;
  border: 1px solid #d4d4d4;
  border-bottom-color: #b4b4b4;
  border-radius: 8px;
  background: linear-gradient(#fff, #f3f3f3);
  color: #505050;
  font: inherit;
  font-size: 26px;
}

.toolbar {
  display: grid;
  grid-template-columns: 1fr 382px 1fr;
  align-items: center;
  height: 76px;
  padding: 2px 15px 0 15px;
  border-bottom: 2px solid #c9c9c9;
  background: linear-gradient(#d4d4d4, #efefef 8px);
}
.tools { display: flex; gap: 18px; padding-left: 2px; }
.pair { display: flex; gap: 1px; }
.segments { display: flex; }
.tool {
  display: grid;
  place-items: center;
  width: 52px;
  padding: 0;
}
.tool-sidebar { width: 82px; }
.tool-forward { width: 51px; }
.segment:first-child {
  border-right: 0;
  border-radius: 8px 0 0 8px;
}
.segment-on {
  border: 0;
  border-radius: 0 8px 8px 0;
  background: #747474;
}

.location { display: grid; align-items: center; }
.location > * { grid-area: 1 / 1; }
.location-select {
  width: 100%;
  padding: 0 50px 0 52px;
  appearance: none;
}
.folder { z-index: 1; margin-left: 14px; pointer-events: none; }
.location-arrows { z-index: 1; justify-self: end; margin-right: 9px; pointer-events: none; }

.search {
  display: flex;
  align-items: center;
  justify-self: end;
  gap: 10px;
  width: 226px;
  height: 46px;
  padding: 0 10px 0 33px;
}
.search svg { flex: none; }
.search-input {
  min-width: 0;
  width: 100%;
  padding: 0;
  border: 0;
  outline: 0;
  background: none;
  font: inherit;
}
.search-input::placeholder { color: #b0b0b0; opacity: 1; }

/* File list */
.files {
  width: 100%;
  table-layout: fixed;
  border-spacing: 0;
  background: #fff;
  font-variant-numeric: tabular-nums;
}
.col-size { width: 194px; }
.col-kind { width: 230px; }
.col-date { width: 346px; }

th {
  height: 46px;
  padding: 0;
  border-bottom: 2px solid #c0c0c0;
  background: #efefef;
  font-size: 22px;
  font-weight: 400;
  text-align: left;
}
.head {
  display: block;
  padding: 0 26px 0 22px;
  border-right: 2px solid #d5d5d5;
  line-height: 36px;
}
th:first-child .head { padding-left: 12px; }
th.size,
td.size { text-align: right; }
.sorted .head {
  display: flex;
  align-items: center;
  justify-content: space-between;
  padding-right: 2px;
  border-right: 0;
  font-weight: 600;
}

tbody::before {
  content: "";
  display: block;
  height: 4px;
  background: #f6f6f6;
}
td {
  height: 38px;
  padding: 3px 0 0 22px;
  border-bottom: 2px solid #f6f8fa;
  background: #0069d9;
  color: #fff;
  font-size: 24px;
  font-weight: 500;
  line-height: 33px;
  white-space: nowrap;
}
td.size { padding: 3px 28px 0 0; }
td.name { padding-left: 57px; font-variant-numeric: normal; }
.file { display: flex; align-items: center; gap: 13px; }
.doc { width: 22px; height: 30px; }

.empty-rows {
  height: 224px;
  border-bottom: 2px solid #ececec;
  background: repeating-linear-gradient(#fff 0 34px, #f4f4f4 34px 72px, #fff 72px 76px);
}

/* Format chooser */
.format {
  display: flex;
  align-items: center;
  justify-content: center;
  gap: 13px;
  padding: 52px 2px 46px 0;
  background: #e7e7e7;
  color: #000;
  font-size: 26px;
}
.format label { padding-bottom: 3px; }
.format-field { display: grid; width: 462px; }
.format-field > * { grid-area: 1 / 1; }
.format-select {
  height: 40px;
  padding: 0 50px 0 16px;
  border: 1px solid #bdbdbd;
  border-bottom-color: #a5a5a5;
  border-radius: 7px;
  background: #fff;
  color: #222;
  font: inherit;
  appearance: none;
}
.stepper {
  display: grid;
  justify-self: end;
  place-items: center;
  width: 33px;
  border-radius: 0 7px 7px 0;
  background: linear-gradient(#6cb3fa, #0a7aff);
  pointer-events: none;
}

.actions {
  display: flex;
  gap: 14px;
  padding: 17px 17px 19px;
}
.action { width: 146px; padding: 0; }
.action-options { width: 152px; margin-right: auto; }
```
